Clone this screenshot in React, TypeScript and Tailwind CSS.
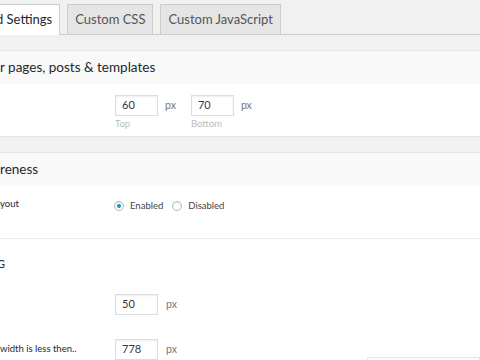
import React from 'react';

function Tab({ label, active }: { label: string; active?: boolean }) {
  if (active) {
    return (
      <div className="-mb-px flex h-[31px] items-center border border-b-0 border-l-0 border-[#ccc] bg-white pr-[7px] text-[13px] text-[#23282d]">
        <span className="-ml-[4px]">{label}</span>
      </div>
    );
  }
  return (
    <div className="-mb-px flex h-[31px] items-center border border-[#ccc] bg-[#e5e5e5] px-[7px] text-[13px] text-[#555]">
      {label}
    </div>
  );
}

function NumInput({ value }: { value: string }) {
  return (
    <div className="flex h-[21px] w-[43px] items-center border border-[#ddd] bg-white pl-[6px] text-[11px] text-[#32373c] shadow-[inset_0_1px_2px_rgba(0,0,0,0.07)]">
      {value}
    </div>
  );
}

function Radio({ checked, label }: { checked?: boolean; label: string }) {
  return (
    <label className="flex items-center gap-[6px]">
      <span className="flex h-[10px] w-[10px] items-center justify-center rounded-full border border-[#b4b9be] bg-white shadow-[inset_0_1px_2px_rgba(0,0,0,0.1)]">
        {checked && <span className="h-[4px] w-[4px] rounded-full bg-[#1e8cbe]" />}
      </span>
      <span className="text-[9.5px] text-[#444]">{label}</span>
    </label>
  );
}

export default function App() {
  return (
    <div className="h-[360px] w-[480px] overflow-hidden bg-[#f1f1f1] font-['Lato',sans-serif]">
      {/* tabs */}
      <div className="flex h-[35px] items-end gap-[7px] border-b border-[#ccc] pt-[4px]">
        <Tab label="d Settings" active />
        <Tab label="Custom CSS" />
        <Tab label="Custom JavaScript" />
      </div>

      {/* margins section */}
      <section className="mt-[15px] border-y border-[#e5e5e5] bg-white">
        <div className="flex h-[33px] items-center bg-[#f9f9f9] text-[13.5px] text-[#23282d]">
          r pages, posts &amp; templates
        </div>
        <div className="h-[52px] pt-[11px]">
          <div className="flex">
            <div className="w-[115px] shrink-0" />
            <div className="flex flex-col">
              <div className="flex items-center">
                <NumInput value="60" />
                <span className="ml-[7px] text-[10.5px] text-[#777]">px</span>
              </div>
              <span className="mt-[1px] text-[9.5px] text-[#bbb]">Top</span>
            </div>
            <div className="ml-[15px] flex flex-col">
              <div className="flex items-center">
                <NumInput value="70" />
                <span className="ml-[7px] text-[10.5px] text-[#777]">px</span>
              </div>
              <span className="mt-[1px] text-[9.5px] text-[#bbb]">Bottom</span>
            </div>
          </div>
        </div>
      </section>

      {/* responsiveness section */}
      <section className="mt-[15px] border-t border-[#e5e5e5] bg-white">
        <div className="flex h-[33px] items-center bg-[#f9f9f9] text-[13.5px] text-[#23282d]">
          reness
        </div>
        <div className="flex h-[52px] items-start pt-[11px]">
          <div className="w-[114px] shrink-0 text-[9.5px] leading-[14px] text-[#23282d]">yout</div>
          <div className="mt-[2px] flex items-center gap-[9px]">
            <Radio checked label="Enabled" />
            <Radio label="Disabled" />
          </div>
        </div>
        <div className="border-t border-[#eee]" />
        <div className="pt-[17px] text-[11px] leading-[16px] text-[#23282d]">
          <span className="-ml-[3px]">G</span>
        </div>
        <div className="mt-[22px] flex items-center">
          <div className="w-[115px] shrink-0" />
          <NumInput value="50" />
          <span className="ml-[8px] text-[10.5px] text-[#777]">px</span>
        </div>
        <div className="mt-[24px] flex items-start">
          <div className="w-[115px] shrink-0 pt-[3px] text-[9.5px] text-[#23282d]">width is less then..</div>
          <NumInput value="778" />
          <span className="ml-[8px] mt-[3px] text-[10.5px] text-[#777]">px</span>
          <div className="ml-auto mt-[18px] h-[10px] w-[113px] border border-[#e5e5e5] bg-white" />
        </div>
      </section>
    </div>
  );
}
